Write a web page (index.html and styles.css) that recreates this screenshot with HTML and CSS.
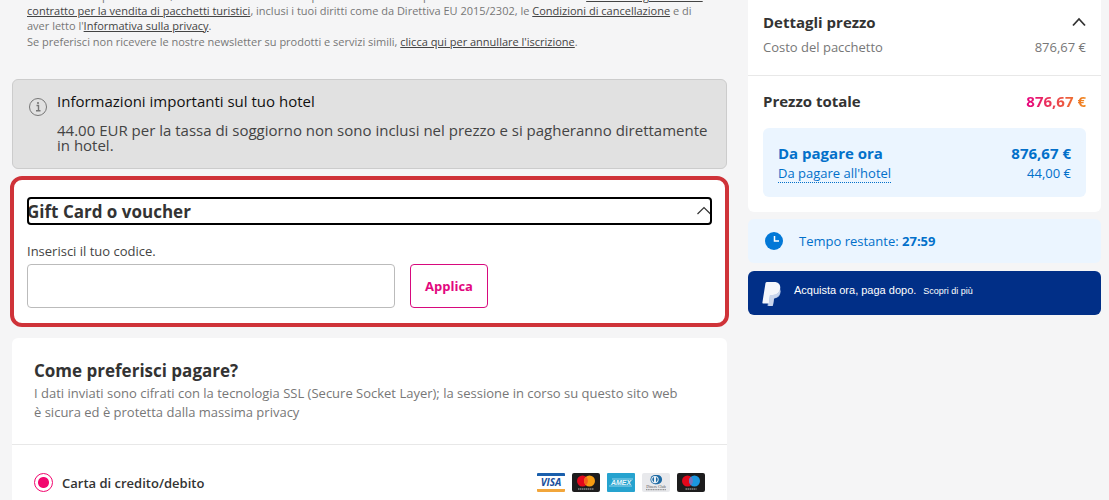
FILE: index.html
```html
<!DOCTYPE html>
<html lang="it">
  <head>
    <meta charset="UTF-8" />
    <meta name="viewport" content="width=device-width, initial-scale=1" />
    <title>Pagamento</title>
    <link rel="stylesheet" href="styles.css">
  </head>
  <body>
    <div class="page">
      <main class="checkout">
        <div class="legal">
          <p>
            Effettuando la prenotazione, dichiari di aver letto e compreso le informazioni precontrattuali e di accettare le <a href="#">Condizioni generali del<br>contratto per la vendita di pacchetti turistici</a>, inclusi i tuoi diritti come da Direttiva EU 2015/2302, le <a href="#">Condizioni di cancellazione</a> e di aver letto l'<a href="#">Informativa sulla privacy</a>.
          </p>
          <p>
            Se preferisci non ricevere le nostre newsletter su prodotti e servizi simili, <a href="#">clicca qui per annullare l'iscrizione</a>.
          </p>
        </div>

        <section class="notice">
          <svg class="notice-icon" viewBox="0 0 20 20" width="20" height="20" aria-hidden="true">
            <circle cx="10" cy="10" r="8.5" fill="none" stroke="#777" />
            <path d="M8.5 8.5h2v5M8 13.8h4.5" fill="none" stroke="#777" stroke-width="1.4" />
            <circle cx="10" cy="6" r="1.1" fill="#777" />
          </svg>
          <div>
            <h2>Informazioni importanti sul tuo hotel</h2>
            <p>44.00 EUR per la tassa di soggiorno non sono inclusi nel prezzo e si pagheranno direttamente in hotel.</p>
          </div>
        </section>

        <section class="voucher">
          <button class="voucher-toggle" type="button" aria-expanded="true">
            <span>Gift Card o voucher</span>
            <svg viewBox="0 0 16 10" width="16" height="10" aria-hidden="true">
              <path d="M1.5 8L8 1.5l6.5 6.5" fill="none" stroke="#333" stroke-width="1.2" />
            </svg>
          </button>
          <form>
            <label for="code">Inserisci il tuo codice.</label>
            <div class="voucher-row">
              <input id="code" type="text" />
              <button class="apply" type="button">Applica</button>
            </div>
          </form>
        </section>

        <section class="payment">
          <header>
            <h2>Come preferisci pagare?</h2>
            <p>I dati inviati sono cifrati con la tecnologia SSL (Secure Socket Layer); la sessione in corso su questo sito web è sicura ed è protetta dalla massima privacy</p>
          </header>
          <div class="method">
            <input id="card" type="radio" name="method" checked />
            <label for="card">Carta di credito/debito</label>
            <div class="cards">
              <svg viewBox="0 0 28 19" width="28" height="19" role="img" aria-label="Visa">
                <rect width="28" height="19" rx="1" fill="#fff" />
                <path d="M0 3V1q0-1 1-1h26q1 0 1 1v2z" fill="#1a5fac" />
                <path d="M0 16v2q0 1 1 1h26q1 0 1-1v-2z" fill="#f2a63b" />
                <text class="visa" x="14" y="13" text-anchor="middle">VISA</text>
              </svg>
              <svg viewBox="0 0 28 19" width="28" height="19" role="img" aria-label="Mastercard">
                <rect width="28" height="19" rx="2" fill="#1d1c1d" />
                <circle cx="10.5" cy="8" r="5.5" fill="#e3071b" />
                <circle cx="17.5" cy="8" r="5.5" fill="#f59c12" />
                <path d="M14 3.8a5.5 5.5 0 0 1 0 8.4a5.5 5.5 0 0 1 0-8.4z" fill="#f4601b" />
                <path d="M6 16h16" stroke="#bbb" stroke-width="1" stroke-dasharray="1.5 .5" />
              </svg>
              <svg viewBox="0 0 28 19" width="28" height="19" role="img" aria-label="American Express">
                <rect width="28" height="19" rx="1" fill="#26a3cf" />
                <path d="M5 6h21M2 13h23" stroke="#bfe7f5" stroke-width=".7" />
                <text class="amex" x="14" y="12" text-anchor="middle">AMEX</text>
              </svg>
              <svg viewBox="0 0 28 19" width="28" height="19" role="img" aria-label="Diners Club">
                <rect width="28" height="19" rx="2" fill="#e8e9ec" />
                <path d="M13 2h2.5a4.6 4.6 0 0 1 0 9.2H13z" fill="#1d6aa4" />
                <circle cx="13" cy="6.6" r="4.6" fill="#1d6aa4" />
                <circle cx="13" cy="6.6" r="3.7" fill="#e8f0f6" />
                <path d="M12 4a2.8 2.8 0 0 0 0 5.200zM14 4a2.8 2.8 0 0 1 0 5.200z" fill="#1d6aa4" />
                <text class="diners" x="14" y="15" text-anchor="middle">Diners Club</text>
                <path d="M4 16.7h20" stroke="#777" stroke-width=".9" stroke-dasharray="1.2 .5" />
              </svg>
              <svg viewBox="0 0 28 19" width="28" height="19" role="img" aria-label="Maestro">
                <rect width="28" height="19" rx="2" fill="#1d1c1d" />
                <circle cx="10.5" cy="8" r="5.5" fill="#e3071b" />
                <circle cx="17.5" cy="8" r="5.5" fill="#1b97df" />
                <path d="M14 3.8a5.5 5.5 0 0 1 0 8.4a5.5 5.5 0 0 1 0-8.4z" fill="#7673bd" />
                <path d="M8.5 16h11" stroke="#bbb" stroke-width="1" stroke-dasharray="1.5 .5" />
              </svg>
            </div>
          </div>
        </section>
      </main>

      <aside class="summary">
        <section class="prices">
          <div class="details">
            <div class="row">
              <h3>Dettagli prezzo</h3>
              <svg viewBox="0 0 14 10" width="14" height="10" aria-hidden="true">
                <path d="M1 8.5L7 2l6 6.5" fill="none" stroke="#333" stroke-width="1.8" />
              </svg>
            </div>
            <div class="row muted">
              <span>Costo del pacchetto</span>
              <span>876,67 €</span>
            </div>
          </div>
          <div class="total">
            <div class="row">
              <h3>Prezzo totale</h3>
              <strong class="amount">876,67 €</strong>
            </div>
            <div class="due">
              <div class="row due-now">
                <span>Da pagare ora</span>
                <span>876,67 €</span>
              </div>
              <div class="row due-later">
                <a href="#">Da pagare all'hotel</a>
                <span>44,00 €</span>
              </div>
            </div>
          </div>
        </section>

        <div class="timer">
          <svg viewBox="0 0 18 18" width="18" height="18" aria-hidden="true">
            <circle cx="9" cy="9" r="9" fill="#0278d7" />
            <path d="M9.5 4v5H14" fill="none" stroke="#fff" stroke-width="1.5" />
          </svg>
          <p>Tempo restante: <strong>27:59</strong></p>
        </div>

        <div class="paypal">
          <svg viewBox="0 0 20 26" width="20" height="26" aria-hidden="true">
            <path d="M8 6h7q4.500 2 3.300 6.500Q17 17 12 17.500l-1 6.500q-.2 1-1 1H5.500z" fill="#9db4dc" />
            <path d="M5 1h8.500q5 .8 4.800 6Q17.500 13.500 11 14H8l-1.200 8.500H1q-.7 0-.6-1L3.500 2Q3.800 1 5 1z" fill="#f4f6fb" />
            <path d="M8 14h3q6-.5 7.200-6.200Q19.500 15 12 17.500l-1 6.500q-.2 1-1 1H6.500z" fill="#c9d5ec" />
          </svg>
          <p>Acquista ora, paga dopo.<a href="#">Scopri di più</a></p>
        </div>
      </aside>
    </div>
  </body>
</html>
```
FILE: styles.css
```css
* {
  box-sizing: border-box;
}

body {
  margin: 0;
  height: 100vh;
  overflow: hidden;
  background: #f5f5f6;
  color: #333;
  font-family: "Open Sans", sans-serif;
  font-size: 13px;
}

h2,
h3,
p {
  margin: 0;
}

button,
input {
  font-family: inherit;
}

.page {
  display: grid;
  grid-template-columns: minmax(0, 1fr) 353px;
  gap: 21px;
  padding: 0 8px 0 12px;
}

/* legal text */
.legal {
  margin-top: -12px;
  padding: 0 15px;
  color: #777;
  font-size: 11px;
  line-height: 15px;
}

.legal p + p {
  margin-top: 1px;
}

.legal a {
  color: #444;
}

/* hotel notice */
.notice {
  display: flex;
  gap: 9px;
  margin-top: 30px;
  padding: 11px 13px 15px 15px;
  border: 1px solid #ccc;
  border-radius: 6px;
  background: #e1e1e1;
}

.notice-icon {
  flex: none;
  margin-top: 6px;
}

.notice h2 {
  color: #111;
  font-size: 15px;
  font-weight: 400;
  line-height: 20px;
}

.notice p {
  margin-top: 12px;
  color: #444;
  font-size: 15px;
  line-height: 15px;
}

/* voucher */
.voucher {
  margin: 7px -2px 0;
  padding: 17px 13px 15px;
  border: 4px solid #cf3339;
  border-radius: 12px;
  background: #fff;
}

.voucher-toggle {
  display: flex;
  align-items: center;
  justify-content: space-between;
  width: 100%;
  height: 28px;
  padding: 0;
  border: 0;
  outline: 2px solid #000;
  outline-offset: -2px;
  border-radius: 4px;
  background: #fff;
  color: #333;
  font-size: 17px;
  font-weight: 700;
}

.voucher label {
  display: block;
  margin-top: 16px;
  color: #444;
  line-height: 20px;
}

.voucher-row {
  display: flex;
  gap: 15px;
  margin-top: 3px;
}

.voucher-row input {
  width: 368px;
  height: 44px;
  padding: 0 12px;
  border: 1px solid #bbb;
  border-radius: 4px;
}

.apply {
  width: 78px;
  height: 44px;
  padding: 0;
  border: 1px solid #d7097d;
  border-radius: 4px;
  background: #fff;
  color: #e2087e;
  font-size: 13px;
  font-weight: 700;
}

/* payment */
.payment {
  margin-top: 11px;
  border-radius: 6px;
  background: #fff;
}

.payment header {
  padding: 21px 40px 22px 22px;
  border-bottom: 1px solid #e8e8e8;
}

.payment h2 {
  font-size: 17px;
  line-height: 24px;
}

.payment header p {
  margin-top: 1px;
  color: #777;
  line-height: 19px;
}

.method {
  display: flex;
  align-items: center;
  height: 75px;
  padding: 0 22px;
}

.method input {
  appearance: none;
  width: 19px;
  height: 19px;
  margin: 0 9px 0 0;
  border: 1px solid #f2066e;
  border-radius: 50%;
  background: radial-gradient(circle, #f2066e 5px, #fff 6px);
}

.method label {
  font-weight: 600;
}

.cards {
  display: flex;
  gap: 7px;
  margin-left: auto;
}

.visa {
  fill: #1a4f9c;
  font: italic 700 10px "Open Sans", sans-serif;
}

.amex {
  fill: #e8f7fc;
  font: italic 700 7px "Liberation Sans", sans-serif;
}

.diners {
  fill: #555;
  font: 4px "Liberation Serif", serif;
}

/* price summary */
.prices {
  border-radius: 0 0 6px 6px;
  background: #fff;
}

.row {
  display: flex;
  align-items: center;
  justify-content: space-between;
}

.row h3 {
  font-size: 15px;
  line-height: 22px;
}

.details {
  padding: 11px 15px 18px;
  border-bottom: 1px solid #e8e8e8;
}

.muted {
  margin-top: 4px;
  color: #777;
  line-height: 20px;
}

.total {
  padding: 14px 15px 15px;
}

.amount {
  background: linear-gradient(90deg, #e6007e, #f08a1c);
  background-clip: text;
  color: transparent;
  font-size: 15px;
}

.due {
  margin-top: 16px;
  padding: 15px 15px 14px;
  border-radius: 6px;
  background: #ebf5ff;
  color: #0270ca;
}

.due-now {
  font-size: 15px;
  font-weight: 700;
  line-height: 20px;
}

.due-later {
  line-height: 20px;
}

.due-later a {
  border-bottom: 1px dotted;
  color: inherit;
  line-height: 18px;
  text-decoration: none;
}

.timer {
  display: flex;
  align-items: center;
  gap: 16px;
  height: 44px;
  margin-top: 7px;
  padding: 0 17px;
  border-radius: 6px;
  background: #ebf5ff;
  color: #0270ca;
}

.paypal {
  display: flex;
  gap: 12px;
  height: 44px;
  margin-top: 8px;
  padding: 10px 14px;
  border-radius: 6px;
  background: #012f87;
  color: #fff;
  font-family: "Liberation Sans", sans-serif;
  font-size: 11px;
  line-height: 18px;
}

.paypal a {
  margin-left: 7px;
  color: inherit;
  font-size: 9px;
  text-decoration: none;
}
```
